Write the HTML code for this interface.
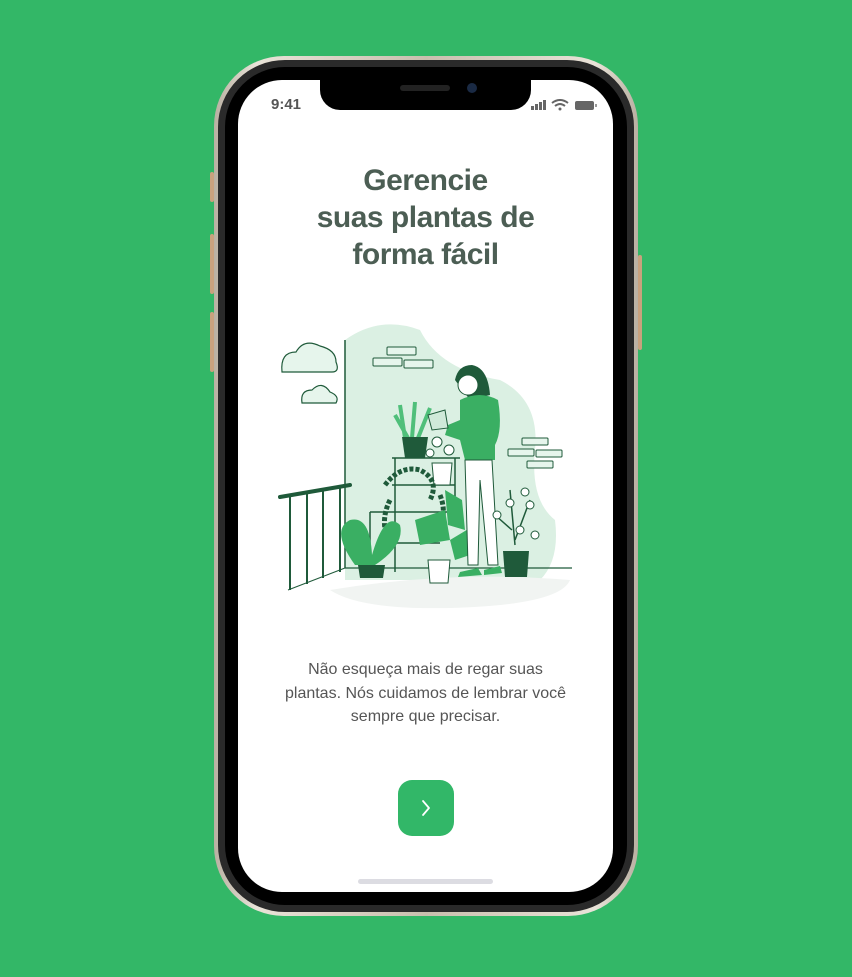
<!DOCTYPE html>
<html><head><meta charset="utf-8"><style>
*{margin:0;padding:0;box-sizing:border-box}
body{width:852px;height:977px;background:#33b767;position:relative;overflow:hidden;font-family:"Liberation Sans",sans-serif}
.frame{position:absolute;left:214px;top:56px;width:424px;height:860px;border-radius:70px;background:linear-gradient(90deg,#b9b0a2,#e9e3d8 10%,#c9bfae 50%,#e9e3d8 90%,#b9b0a2)}
.bezel{position:absolute;left:218px;top:60px;width:416px;height:852px;border-radius:67px;background:#2a2a2a}
.bezel2{position:absolute;left:225px;top:67px;width:402px;height:838px;border-radius:60px;background:#000}
.screen{position:absolute;left:238px;top:80px;width:375px;height:812px;border-radius:44px;background:#fff;overflow:hidden}
.notch{position:absolute;left:82px;top:-1px;width:211px;height:31px;background:#000;border-radius:0 0 20px 20px}
.btnside{position:absolute;background:#c9a27e;width:4px;border-radius:2px}
h1{position:absolute;top:82px;left:0;width:375px;text-align:center;font-size:30px;line-height:37px;color:#4c5e54;font-weight:bold;letter-spacing:-0.5px}
p{position:absolute;top:578px;left:0;width:375px;text-align:center;font-size:16px;line-height:23.5px;color:#555}
.go{position:absolute;left:160px;top:700px;width:56px;height:56px;border-radius:14px;background:#32b768}
.home{position:absolute;left:120px;top:799px;width:135px;height:5px;border-radius:3px;background:#dcdce2}
</style></head><body>
<div class="btnside" style="left:210px;top:172px;height:30px"></div>
<div class="btnside" style="left:210px;top:234px;height:60px"></div>
<div class="btnside" style="left:210px;top:312px;height:60px"></div>
<div class="btnside" style="left:638px;top:255px;height:95px"></div>
<div class="frame"></div><div class="bezel"></div><div class="bezel2"></div>
<div class="screen">
 <div class="notch"><div style="position:absolute;left:80px;top:6px;width:50px;height:6px;border-radius:3px;background:#222"></div><div style="position:absolute;left:147px;top:4px;width:10px;height:10px;border-radius:50%;background:#1a2a44"></div></div>
 <div style="position:absolute;left:33px;top:16px;font-size:15px;color:#555;font-weight:bold">9:41</div>
 <svg style="position:absolute;left:293px;top:19px" width="70" height="12">
  <rect x="0" y="7" width="3" height="4" fill="#666"/><rect x="4" y="5" width="3" height="6" fill="#666"/><rect x="8" y="3" width="3" height="8" fill="#666"/><rect x="12" y="1" width="3" height="10" fill="#666"/>
  <path d="M21 4 Q29 -2 37 4 M24 7 Q29 3 34 7" stroke="#666" stroke-width="2" fill="none"/><circle cx="29" cy="10" r="1.5" fill="#666"/>
  <rect x="44" y="2" width="19" height="9" rx="2" fill="#666"/><rect x="64" y="5" width="2" height="3" fill="#999"/>
 </svg>
 <h1>Gerencie<br>suas plantas de<br>forma fácil</h1>
 <svg style="position:absolute;left:32px;top:230px" width="310" height="300" viewBox="270 310 310 300">
  <path d="M345 340 Q380 315 420 330 Q440 370 500 380 Q540 400 535 450 Q530 500 555 520 Q560 560 540 580 L345 580 Z" fill="#dbf0e3"/>
  <path d="M330 590 Q450 570 570 580 Q560 605 450 608 Q360 610 330 590Z" fill="#f1f4f2"/>
  <line x1="345" y1="340" x2="345" y2="568" stroke="#1f5a3a" stroke-width="1.5"/>
  <line x1="345" y1="568" x2="572" y2="568" stroke="#1f5a3a" stroke-width="1.2"/>
  <path d="M282 372 Q280 352 296 352 Q304 338 320 346 Q336 350 336 362 Q340 372 332 372 Z" fill="#e6f5ec" stroke="#1f5a3a" stroke-width="1.2"/>
  <path d="M302 403 Q300 390 312 390 Q322 380 330 392 Q340 396 336 403 Z" fill="#e6f5ec" stroke="#1f5a3a" stroke-width="1.2"/>
  <g fill="#e6f5ec" stroke="#1f5a3a" stroke-width="1"><rect x="387" y="347" width="29" height="8" rx="1"/><rect x="373" y="358" width="29" height="8" rx="1"/><rect x="404" y="360" width="29" height="8" rx="1"/><rect x="522" y="438" width="26" height="7" rx="1"/><rect x="508" y="449" width="26" height="7" rx="1"/><rect x="536" y="450" width="26" height="7" rx="1"/><rect x="527" y="461" width="26" height="7" rx="1"/></g>
  <path d="M280 497 L350 485" stroke="#1f5a3a" stroke-width="4" stroke-linecap="round"/>
  <g stroke="#1f5a3a" stroke-width="2"><line x1="290" y1="497" x2="290" y2="590"/><line x1="307" y1="494" x2="307" y2="584"/><line x1="323" y1="491" x2="323" y2="578"/><line x1="340" y1="488" x2="340" y2="572"/></g>
  <line x1="288" y1="590" x2="345" y2="568" stroke="#1f5a3a" stroke-width="1"/>
  <g stroke="#1f5a3a" stroke-width="1.5" fill="none"><path d="M395 458 L395 572 M455 458 L455 500 M392 458 L460 458 M392 485 L455 485 M370 512 L455 512 M370 512 L370 572 M392 543 L440 543"/></g>
  <path d="M405 438 L400 405 M412 438 L415 402 M418 438 L430 408 M408 438 L395 415" stroke="#4fbf7a" stroke-width="4"/>
  <path d="M402 437 L428 437 L425 458 L405 458 Z" fill="#1f5a3a"/>
  <path d="M432 463 L452 463 L450 485 L434 485Z" fill="#fff" stroke="#1f5a3a"/>
  <g fill="#fff" stroke="#1f5a3a"><circle cx="437" cy="442" r="5"/><circle cx="449" cy="450" r="5"/><circle cx="430" cy="453" r="4"/></g>
  <path d="M385 485 Q400 465 420 470 Q440 480 430 500 M390 500 Q380 520 388 540 M440 495 Q450 520 430 540" stroke="#1f5a3a" stroke-width="5" fill="none" stroke-dasharray="4 2"/>
  <path d="M355 565 Q330 530 350 520 Q370 515 372 555 Q385 510 400 525 Q405 545 375 565Z" fill="#3aaf63"/>
  <path d="M358 565 L385 565 L383 578 L360 578Z" fill="#1f5a3a"/>
  <path d="M415 520 L445 510 L450 540 L420 545Z M445 490 L462 500 L465 530 L448 525Z M450 540 L475 525 L470 555 L455 560Z" fill="#3aaf63"/>
  <path d="M428 560 L450 560 L448 583 L430 583Z" fill="#fff" stroke="#1f5a3a"/>
  <path d="M455 380 Q458 365 472 365 Q488 368 490 395 L470 400 Z" fill="#1f5a3a"/>
  <circle cx="468" cy="385" r="10" fill="#fff" stroke="#1f5a3a"/>
  <path d="M460 400 Q480 390 498 400 Q503 430 495 445 L495 460 L465 460 L460 440 L445 435 L448 425 L460 420Z" fill="#3aaf63"/>
  <path d="M465 460 L492 460 L498 565 L488 565 L480 480 L478 565 L468 565 Z" fill="#fff" stroke="#1f5a3a"/>
  <path d="M460 572 L478 568 L482 575 L458 577Z M484 570 L500 566 L502 573 L484 575Z" fill="#3aaf63"/>
  <path d="M428 415 L445 410 L448 428 L432 430Z" fill="#cfe9d9" stroke="#1f5a3a"/>
  <path d="M515 545 L510 490 M515 540 L530 500 M512 530 L495 515" stroke="#1f5a3a" stroke-width="1.5"/>
  <g fill="#fff" stroke="#1f5a3a"><circle cx="525" cy="492" r="4"/><circle cx="530" cy="505" r="4"/><circle cx="510" cy="503" r="4"/><circle cx="497" cy="515" r="4"/><circle cx="520" cy="530" r="4"/><circle cx="535" cy="535" r="4"/></g>
  <path d="M503 551 L529 551 L527 577 L505 577Z" fill="#1f5a3a"/>
 </svg>
 <p>Não esqueça mais de regar suas<br>plantas. Nós cuidamos de lembrar você<br>sempre que precisar.</p>
 <div class="go"><svg width="56" height="56"><path d="M25 21 L31 28 L25 35" stroke="#fff" stroke-width="1.8" fill="none" stroke-linecap="round" stroke-linejoin="round"/></svg></div>
 <div class="home"></div>
</div>
</body></html>
